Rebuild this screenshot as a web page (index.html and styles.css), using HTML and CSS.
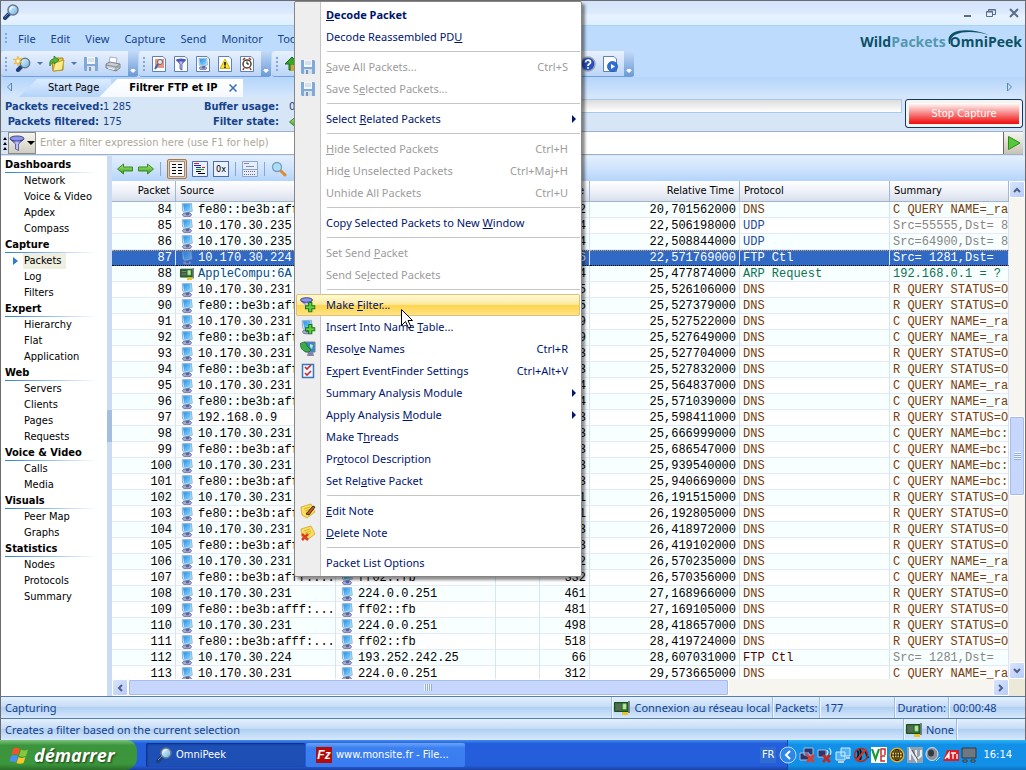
FILE: index.html
```html
<!DOCTYPE html>
<html lang="fr">
<head>
    <meta charset="UTF-8">
    <meta name="viewport" content="width=device-width, initial-scale=1.0">
    <title>OmniPeek</title>
    <link rel="stylesheet" href="styles.css">
</head>
<body>
    <!-- Icon sprite -->
    <svg class="sprite" aria-hidden="true">
        <linearGradient id="gLens" x1="0" y1="0" x2="1" y2="1"><stop offset="0" stop-color="#f4fcff"/><stop offset="1" stop-color="#5fb0e8"/></linearGradient>
        <linearGradient id="gScreen" x1="0" y1="0" x2="1" y2="1"><stop offset="0" stop-color="#1e8ce6"/><stop offset="1" stop-color="#8fe0ff"/></linearGradient>
        <linearGradient id="gGreen" x1="0" y1="0" x2="0" y2="1"><stop offset="0" stop-color="#b2f07a"/><stop offset="1" stop-color="#2f9a1c"/></linearGradient>
        <linearGradient id="gFunnel" x1="0" y1="0" x2="1" y2="0"><stop offset="0" stop-color="#2a2f98"/><stop offset=".5" stop-color="#c4ccff"/><stop offset="1" stop-color="#2a2f98"/></linearGradient>
        <symbol id="lens" viewBox="0 0 16 16"><path d="M7 9 2 14" stroke="#1d3f7c" stroke-width="4" stroke-linecap="round"/><path d="M6 9 2 13" stroke="#5a8ccc" stroke-width="1"/><circle cx="10" cy="6" r="5" fill="url(#gLens)" stroke="#6a7888" stroke-width="1.5"/><path d="M7 6a3 3 0 0 1 3-3" stroke="#fff" fill="none"/></symbol>
        <symbol id="lensr" viewBox="0 0 16 16"><path d="m9 9 5 5" stroke="#e08a30" stroke-width="3" stroke-linecap="round"/><circle cx="6" cy="6" r="4.5" fill="#a8e0fb" stroke="#7c9cb8" stroke-width="1.3"/></symbol>
        <symbol id="newcap" viewBox="0 0 18 16"><path d="M9 10 5 14" stroke="#1d3f7c" stroke-width="4" stroke-linecap="round"/><circle cx="12" cy="7" r="4.7" fill="url(#gLens)" stroke="#6a7888" stroke-width="1.5"/><path d="m5 0 1 3 3-1-2 3 2 2-3-.5L5 10 4 7 1 8l2-3-3-2 3.500.500z" fill="#f8c93c" stroke="#e6a820" stroke-width=".5"/><circle cx="5" cy="5" r="1.500" fill="#fff"/></symbol>
        <symbol id="folder" viewBox="0 0 16 16"><path d="M3 4h4l1-2h6v12l-10 1z" fill="#e8c84a" stroke="#a88418"/><path d="m6 7 9-3-2 10-9 1z" fill="#fbec8e" stroke="#b8921e" stroke-width=".8"/><path d="M1 10C0 5 2 3 5 3V0l5 4-5 4V6C3 6 2 8 1 10z" fill="#54b93a" stroke="#256e18" stroke-width=".7"/></symbol>
        <symbol id="disk" viewBox="0 0 16 16"><path d="M1 1h13l1 1v13H2l-1-1z" fill="#7fa9d8"/><path d="M4 1h8v7H4z" fill="#f3f6fa"/><path d="M5 3h6M5 5h6" stroke="#b9cbe0"/><path d="M4 10h8v5H4z" fill="#d9e0e8"/><path d="M6 11h2v4H6z" fill="#7495bd"/></symbol>
        <symbol id="printer" viewBox="0 0 16 16"><path d="m5 1 7 1-1 6-7-1z" fill="#fff" stroke="#8892a4" stroke-width=".7"/><path d="m1 8 4-2 10 2v4l-4 3L1 12z" fill="#c8ccd4" stroke="#646c7c" stroke-width=".8"/><path d="m1 9 10 2 4-3M11 11v4" stroke="#747c8c" fill="none" stroke-width=".8"/><path d="m3 12 6 1.500" stroke="#fff"/><circle cx="13" cy="11" r=".8" fill="#2fa32f"/></symbol>
        <symbol id="page" viewBox="0 0 16 16"><path d="M1.500.500h10.500l2.500 2.500v12.500h-13z" fill="#fdfeff" stroke="#5f80b8"/></symbol>
        <symbol id="pglens" viewBox="0 0 16 16"><use href="#page"/><path d="M4 3h9v9H4z" fill="#e8957c"/><path d="m7 8-3 5" stroke="#3767a8" stroke-width="2"/><circle cx="9" cy="6" r="2.500" fill="#d6efff" stroke="#7a5a66"/></symbol>
        <symbol id="funnel" viewBox="0 0 16 16"><path d="M1 4 6.500 9v5l3 1.500V9L15 4z" fill="url(#gFunnel)" stroke="#24297c" stroke-width=".6"/><ellipse cx="8" cy="3.500" rx="7" ry="2.500" fill="#8e97e4" stroke="#24297c" stroke-width=".8"/></symbol>
        <symbol id="pgfunnel" viewBox="0 0 16 16"><use href="#page"/><path d="M3.500 4 7 8v5l2 1V8l3.500-4z" fill="url(#gFunnel)" stroke="#24297c" stroke-width=".6"/><ellipse cx="8" cy="4" rx="4.700" ry="1.500" fill="#4d57c0"/></symbol>
        <symbol id="pc" viewBox="0 0 16 16"><ellipse cx="8" cy="13.500" rx="5" ry="2.300" fill="#a6abd2" stroke="#55588c" stroke-width=".8"/><path d="M6 10h5l-1 4H7z" fill="#5c6098"/><path d="m2.500.800 10.500-.5 1 9L5 11.500 3 9z" fill="#cfe2f6" stroke="#6c86b8" stroke-width=".7"/><path d="m3.500 1.500 8.500-.5.500 7.500L5 10z" fill="url(#gScreen)"/></symbol>
        <symbol id="pgpc" viewBox="0 0 16 16"><use href="#page"/><svg x="2" y="2" width="12" height="12"><use href="#pc"/></svg></symbol>
        <symbol id="pgwarn" viewBox="0 0 16 16"><use href="#page"/><path d="m8 3 5 9.500H3z" fill="#ffe21f" stroke="#b59a00" stroke-width=".7"/><path d="M8 6v3.500M8 10.500V12" stroke="#000" stroke-width="1.500"/></symbol>
        <symbol id="pgclock" viewBox="0 0 16 16"><use href="#page"/><path d="M4 4l2-2M12 4l-2-2M5 12l-1 2M11 12l1 2" stroke="#a03a20" stroke-width="1.600"/><circle cx="8" cy="8" r="4" fill="#fff" stroke="#53402e" stroke-width="1.500"/><path d="M8 5.500V8h2" stroke="#000" fill="none"/></symbol>
        <symbol id="pgplay" viewBox="0 0 16 16"><use href="#page"/><circle cx="10.500" cy="10.500" r="5" fill="#2f6fdc" stroke="#1c49a0" stroke-width=".7"/><path d="m9 8 4 2.500-4 2.500z" fill="#fff"/></symbol>
        <symbol id="help" viewBox="0 0 16 16"><circle cx="8" cy="8" r="7" fill="#2a4fc0" stroke="#9aa4b4" stroke-width="1.500"/><path d="M5.500 6.500C5.500 3 11 3.500 10.500 6.500 10 8 8 8 8 10M8 11.300v1.500" stroke="#fff" stroke-width="1.800" fill="none"/></symbol>
        <symbol id="uparrow" viewBox="0 0 16 16"><path d="M8 1 1 8h4v6h7V8h3z" fill="#38a52a" stroke="#1b6514"/><path d="M7 9h6v6H7z" fill="#d6a13a"/></symbol>
        <symbol id="card" viewBox="0 0 16 16"><path d="M.500 2.500h13.500v9H.500z" fill="#2e7130" stroke="#1f4c24"/><path d="M2 4h5v6H2z" fill="#182818"/><path d="M2 5h5M2 7h5M2 9h5" stroke="#b9cdb0" stroke-width=".8"/><path d="M9 4h3v5H9z" fill="#c4e4b4" stroke="#93d573" stroke-width=".8"/><path d="M8 12h6v3H8z" fill="#e5c52e"/><path d="M15 1v12" stroke="#5d6567" stroke-width="1.500"/></symbol>
        <symbol id="arrl" viewBox="0 0 16 12"><path d="m.500 6 6-5v3H15.500v4H6.500v3z" fill="url(#gGreen)" stroke="#3b8a22"/></symbol>
        <symbol id="arrr" viewBox="0 0 16 12"><path d="m15.500 6-6-5v3H.500v4h9v3z" fill="url(#gGreen)" stroke="#3b8a22"/></symbol>
        <symbol id="plus" viewBox="0 0 10 10"><path d="M3.500.500h3v3h3v3h-3v3h-3v-3h-3v-3h3z" fill="#62cf3d" stroke="#187415"/></symbol>
        <symbol id="mkfilter" viewBox="0 0 16 16"><path d="m1 4 4 4v4l2 1V8l5-4z" fill="url(#gFunnel)"/><ellipse cx="6.500" cy="3" rx="6" ry="2.300" fill="#8e97e4" stroke="#24297c" stroke-width=".8"/><use href="#plus" x="5" y="5" width="10.500" height="10.500"/></symbol>
        <symbol id="nametab" viewBox="0 0 16 16"><svg width="14" height="16"><use href="#pc"/></svg><use href="#plus" x="5" y="5" width="10.500" height="10.500"/></symbol>
        <symbol id="resolve" viewBox="0 0 16 16"><path d="m4 1 11 0v10H5z" fill="#3b83cc" stroke="#74809c"/><path d="m8 11 5 0 1 4H7z" fill="#8286a8"/><path d="M0 3c3-3 7-2 7 2l4 4-2 2C4 11 1 9 0 3z" fill="#3aad44" stroke="#1a5c34" stroke-width=".7"/><path d="m10 3 3 1-1 4-2-2z" fill="#b9eeb7"/></symbol>
        <symbol id="checks" viewBox="0 0 16 16"><path d="M2.500 1.500h11v13h-11z" fill="#eef6ff" stroke="#3a78b8" stroke-width="1.500"/><path d="m5 4 2 2 4-4M5 10l2 2 4-4" stroke="#d22c2c" stroke-width="1.700" fill="none"/></symbol>
        <symbol id="note" viewBox="0 0 16 16"><path d="m1 4 10-3 4 8-8 6-5-3z" fill="#fbdf58" stroke="#c89a28" stroke-width=".7"/><path d="m4 6 6-2M5 8l6-2M6 10l5-2" stroke="#c8a23a" stroke-width=".8"/></symbol>
        <symbol id="editnote" viewBox="0 0 16 16"><use href="#note"/><path d="m6 11 7-8 2 1-6 8z" fill="#c85a28" stroke="#24150c" stroke-width=".8"/></symbol>
        <symbol id="delnote" viewBox="0 0 16 16"><use href="#note"/><path d="m2 9 6 6M8 9l-6 6" stroke="#dd3c24" stroke-width="2.500"/></symbol>
    </svg>

    <div class="app">
        <header class="titlebar">
            <svg class="ico"><use href="#lens"/></svg>
            <div class="winbtns">
                <button aria-label="Minimize"><svg viewBox="0 0 10 10"><path d="M1 8h7" stroke="#5a6d88" stroke-width="2"/></svg></button>
                <button aria-label="Restore"><svg viewBox="0 0 10 10"><path d="M.500 3.500h6v5h-6zM2.500 3V1.500h7v5H7M.500 4h6M2 2h7" fill="none" stroke="#5a6d88"/></svg></button>
                <button aria-label="Close"><svg viewBox="0 0 10 10"><path d="m1 1 8 8M9 1 1 9" stroke="#5a6d88" stroke-width="2"/></svg></button>
            </div>
        </header>

        <div class="top">
            <div>
                <nav class="menubar">
                    <i class="grip"></i>
                    <button>File</button><button>Edit</button><button>View</button><button>Capture</button><button>Send</button><button>Monitor</button><button>Tools</button>
                </nav>
                <div class="toolbars">
                    <div class="toolbar tb-file">
                        <i class="grip"></i>
                        <button aria-label="New capture"><svg class="ico wide"><use href="#newcap"/></svg></button>
                        <i class="drop"></i>
                        <button aria-label="Open"><svg class="ico"><use href="#folder"/></svg></button>
                        <i class="drop"></i>
                        <button aria-label="Save"><svg class="ico"><use href="#disk"/></svg></button>
                        <button aria-label="Print"><svg class="ico"><use href="#printer"/></svg></button>
                        <i class="more"></i>
                    </div>
                    <div class="toolbar tb-view">
                        <i class="grip"></i>
                        <button aria-label="Capture window"><svg class="ico"><use href="#pglens"/></svg></button>
                        <button aria-label="Filters"><svg class="ico"><use href="#pgfunnel"/></svg></button>
                        <button aria-label="Names"><svg class="ico"><use href="#pgpc"/></svg></button>
                        <button aria-label="Alarms"><svg class="ico"><use href="#pgwarn"/></svg></button>
                        <button aria-label="Log"><svg class="ico"><use href="#pgclock"/></svg></button>
                        <i class="more"></i>
                    </div>
                    <div class="toolbar tb-help">
                        <i class="grip"></i>
                        <button aria-label="Up"><svg class="ico"><use href="#uparrow"/></svg></button>
                        <span class="spacer"></span>
                        <button aria-label="Help"><svg class="ico"><use href="#help"/></svg></button>
                        <button aria-label="Demo"><svg class="ico"><use href="#pgplay"/></svg></button>
                        <i class="more"></i>
                    </div>
                </div>
            </div>
            <div class="brand">
                <span>Wild</span><span class="light">Packets</span>
                <span class="omni">OmniPeek<svg viewBox="0 0 50 20"><path d="M2 15C-3 -2 26 -1 42 6 26 1 2 1 3 15z" fill="#0c5066"/></svg></span>
            </div>
        </div>

        <div class="tabs">
            <svg class="tabarrow" viewBox="0 0 6 10"><path d="M5.500 1v8l-4-4z" fill="none" stroke="#5a84b8"/></svg>
            <button class="tab">Start Page</button>
            <button class="tab active">Filtrer FTP et IP <svg class="x" viewBox="0 0 8 8"><path d="m.500.500 7 7M7.500.500l-7 7" stroke="#3c6eb0" stroke-width="1.500"/></svg></button>
            <svg class="tabarrow last" viewBox="0 0 6 10"><path d="M.500 1v8l4-4z" fill="none" stroke="#5a84b8"/></svg>
        </div>

        <div class="info">
            <dl>
                <dt>Packets received:</dt><dd>1 285</dd>
                <dt>Packets filtered:</dt><dd>175</dd>
            </dl>
            <dl class="second">
                <dt>Buffer usage:</dt><dd>0%</dd>
                <dt>Filter state:</dt><dd><svg viewBox="0 0 16 12"><use href="#arrl"/></svg></dd>
            </dl>
            <div class="progress"></div>
            <button class="stop">Stop Capture</button>
        </div>

        <div class="filter">
            <i class="updown"><b></b><b></b><b></b></i>
            <button class="filterbtn" aria-label="Insert filter"><svg class="ico"><use href="#funnel"/></svg><i class="drop black"></i></button>
            <input type="text" aria-label="Filter expression" placeholder="Enter a filter expression here (use F1 for help)">
            <button class="apply" aria-label="Apply"><svg viewBox="0 0 14 16"><path d="M1.500 1.500v13L13 8z" fill="#58c83a" stroke="#2b8a1c"/></svg></button>
        </div>

        <main>
            <nav class="views">
                <h2>Dashboards</h2>
                <a href="#">Network</a><a href="#">Voice &amp; Video</a><a href="#">Apdex</a><a href="#">Compass</a>
                <h2>Capture</h2>
                <a href="#" class="current">Packets</a><a href="#">Log</a><a href="#">Filters</a>
                <h2>Expert</h2>
                <a href="#">Hierarchy</a><a href="#">Flat</a><a href="#">Application</a>
                <h2>Web</h2>
                <a href="#">Servers</a><a href="#">Clients</a><a href="#">Pages</a><a href="#">Requests</a>
                <h2>Voice &amp; Video</h2>
                <a href="#">Calls</a><a href="#">Media</a>
                <h2>Visuals</h2>
                <a href="#">Peer Map</a><a href="#">Graphs</a>
                <h2>Statistics</h2>
                <a href="#">Nodes</a><a href="#">Protocols</a><a href="#">Summary</a>
            </nav>
            <div class="splitter"></div>
            <section class="packets">
                <div class="pktbar">
                    <button aria-label="Back"><svg class="arr"><use href="#arrl"/></svg></button>
                    <button aria-label="Forward"><svg class="arr"><use href="#arrr"/></svg></button>
                    <i class="bar"></i>
                    <button class="on" aria-label="Packet list"><svg viewBox="0 0 16 16"><path d="M.500.500h15v15H.500z" fill="#f6f6f6" stroke="#8090b0"/><path d="M3 3.500h4M9 3.500h4M3 6.500h4M9 6.500h4M3 9.500h4M9 9.500h4M3 12.500h4M9 12.500h4" stroke="#000"/></svg></button>
                    <button aria-label="Decode"><svg viewBox="0 0 16 16"><path d="M.500.500h15v15H.500z" fill="#eaf1fc" stroke="#4c6ca8"/><path d="M2 2.500h5" stroke="#d22"/><path d="M2 4.500h7M4 6.500h5" stroke="#22c"/><path d="M4 8.500h8" stroke="#191"/><path d="M4 10.500h5M6 12.500h7" stroke="#000"/><path d="M10 6.500h3" stroke="#d22"/></svg></button>
                    <button class="hex">0x</button>
                    <i class="bar"></i>
                    <button aria-label="Layout"><svg viewBox="0 0 16 16"><path d="M.500.500h15v15H.500zM0 8.500h16" fill="#e6eefb" stroke="#8ba4d0"/><path d="M2 2.500h5M4 5.500h8" stroke="#88a"/><path d="M2 10.500h12M2 13.500h12" stroke="#667" stroke-dasharray="1 1"/></svg></button>
                    <i class="bar"></i>
                    <button aria-label="Find"><svg><use href="#lensr"/></svg></button>
                </div>
                <div class="grid">
                    <div class="tablewrap">
                        <table>
                            <colgroup><col class="c-num"><col class="c-addr"><col class="c-addr"><col class="c-flags"><col class="c-size"><col class="c-wide"><col class="c-wide"><col></colgroup>
                            <thead><tr><th class="r">Packet</th><th>Source</th><th>Destination</th><th>Flags</th><th class="r">Size</th><th class="r">Relative Time</th><th>Protocol</th><th>Summary</th></tr></thead>
                            <tbody id="rows"></tbody>
                        </table>
                    </div>
                    <div class="vscroll">
                        <button aria-label="Scroll up"><svg viewBox="0 0 8 8"><path d="m1 6 3-3 3 3" fill="none" stroke="#4d6185" stroke-width="2"/></svg></button>
                        <div class="thumb"></div>
                        <button aria-label="Scroll down"><svg viewBox="0 0 8 8"><path d="m1 2 3 3 3-3" fill="none" stroke="#4d6185" stroke-width="2"/></svg></button>
                    </div>
                    <div class="hscroll">
                        <button aria-label="Scroll left"><svg viewBox="0 0 8 8"><path d="M6 1 3 4l3 3" fill="none" stroke="#4d6185" stroke-width="2"/></svg></button>
                        <div class="thumb"></div>
                        <button aria-label="Scroll right"><svg viewBox="0 0 8 8"><path d="m2 1 3 3-3 3" fill="none" stroke="#4d6185" stroke-width="2"/></svg></button>
                    </div>
                </div>
            </section>
        </main>

        <footer class="status">
            <span class="grow">Capturing</span>
            <span class="cell"><svg class="ico"><use href="#card"/></svg>Connexion au réseau local</span>
            <span class="cell">Packets:</span>
            <span class="cell count">177</span>
            <span class="cell">Duration:</span>
            <span class="cell time">00:00:48</span>
        </footer>
        <footer class="status">
            <span class="grow">Creates a filter based on the current selection</span>
            <span class="cell adapter"><svg class="ico"><use href="#card"/></svg>None</span>
            <span class="cell rest"></span>
        </footer>
    </div>

    <div class="taskbar">
        <button class="start"><svg viewBox="0 0 20 18"><path d="M3 3c3-2 5-1 7 0L8 9C6 8 4 7.500 1.500 9z" fill="#f0552a"/><path d="M11 3.500c2 1 4 1.500 7 0L16 10c-2 1-5 1-7 0z" fill="#86c83c"/><path d="M1 10c3-1.500 5-1 7 0l-2 6.500c-2-1-4-1.500-7 0z" fill="#4a90f0"/><path d="M8.500 11c2 1 4 1.500 7 0l-2 6c-2 1-5 1-7 0z" fill="#f8c828"/></svg>démarrer</button>
        <button class="task pressed"><svg class="ico"><use href="#lens"/></svg>OmniPeek</button>
        <button class="task"><span class="fz">Fz</span>www.monsite.fr - File...</button>
        <span class="lang">FR</span>
        <div class="tray">
            <button class="expand" aria-label="Show hidden icons"><svg viewBox="0 0 18 18"><circle cx="9" cy="9" r="8" fill="#2f86e8" stroke="#b8dcfa"/><path d="m11 5-4 4 4 4" fill="none" stroke="#fff" stroke-width="2"/></svg></button>
            <svg viewBox="0 0 16 16"><path d="M5 1h9v7H5zM1 6h9v7H1z" fill="#29336c" stroke="#aebbd8"/><path d="m8 8 7 7M15 8l-7 7" stroke="#e23a28" stroke-width="2.500"/></svg>
            <svg viewBox="0 0 16 16"><path d="M1 3h8v7H1z" fill="#29336c" stroke="#aebbd8"/><path d="M10 3q2 2 0 5M12 1q4 4 0 8" fill="none" stroke="#fff"/><path d="m6 8 7 7M13 8l-7 7" stroke="#c4281c" stroke-width="2.500"/></svg>
            <svg viewBox="0 0 16 16"><path d="M6 1h9v8H6zM1 5h9v8H1z" fill="#49b4f0" stroke="#d8eaff"/><path d="M3 15h6M11 11h4" stroke="#c6cce0" stroke-width="2"/></svg>
            <svg viewBox="0 0 16 16"><path d="M4 3q3 4 0 9M7 2q2 6 0 11M12 3l3 8" stroke="#111" stroke-width="2" fill="none"/><circle cx="8" cy="8" r="6.500" fill="none" stroke="#b42a18" stroke-width="1.500"/><path d="M13 2 3 14" stroke="#d8321c" stroke-width="2"/></svg>
            <svg viewBox="0 0 16 16"><path d="M0 0h16v16H0z" fill="#fff"/><path d="m1 2 3.500 10L8 2" fill="none" stroke="#1a9a34" stroke-width="2.200"/><path d="M10 8V2h4v6M14 9h-4v5h4" fill="none" stroke="#d02828" stroke-width="1.500"/></svg>
            <svg viewBox="0 0 16 16"><circle cx="8" cy="8" r="7.500" fill="#e9a820"/><circle cx="8" cy="8" r="5.500" fill="#ffd24a" stroke="#221"/><path d="M2.500 8h11M8 2v12M3.500 5h9M3.500 11h9" stroke="#221"/><ellipse cx="8" cy="8" rx="2.500" ry="5.500" fill="none" stroke="#221"/></svg>
            <svg viewBox="0 0 16 16"><path d="M0 0h16v16H0z" fill="#96a0ac"/><path d="M3 13V3l6 10V3M9 13l5-4V3" fill="none" stroke="#e8ecf0" stroke-width="2"/><path d="m5 3 6 10" stroke="#46505c"/></svg>
            <svg viewBox="0 0 16 16"><ellipse cx="7" cy="7" rx="6" ry="6.500" fill="#8d9299" stroke="#dde"/><ellipse cx="6" cy="6" rx="3" ry="3.500" fill="#353a42"/><path d="m11 14 4-4" stroke="#cde"/></svg>
            <svg viewBox="0 0 16 16"><path d="M4 3h12v11H0z" fill="#dd1c24"/><path d="m2 12 4-6v6M3 10h3M8 6h5M10 6v6M14 7v5" stroke="#fff" stroke-width="1.300" fill="none"/></svg>
            <svg viewBox="0 0 16 16"><path d="M1 1h14v10H1z" fill="#6f7780" stroke="#30363e"/><path d="M2 13h4v2H2zM10 13h4v2h-4z" fill="#8a929a" stroke="#30363e"/></svg>
            <span class="clock">16:14</span>
        </div>
    </div>

    <!-- Context menu over the packet list -->
    <div class="ctxmenu" role="menu">
        <button class="bold"><span><u>D</u>ecode Packet</span></button>
        <button><span>Decode Reassembled PD<u>U</u></span></button>
        <hr>
        <button disabled><svg><use href="#disk"/></svg><span><u>S</u>ave All Packets...</span><kbd>Ctrl+S</kbd></button>
        <button disabled><svg><use href="#disk"/></svg><span>Save S<u>e</u>lected Packets...</span></button>
        <hr>
        <button class="sub"><span>Select <u>R</u>elated Packets</span></button>
        <hr>
        <button disabled><span><u>H</u>ide Selected Packets</span><kbd>Ctrl+H</kbd></button>
        <button disabled><span>Hid<u>e</u> Unselected Packets</span><kbd>Ctrl+Maj+H</kbd></button>
        <button disabled><span>Unhide All Packets</span><kbd>Ctrl+U</kbd></button>
        <hr>
        <button><span>Copy Selected Packets to New <u>W</u>indow</span></button>
        <hr>
        <button disabled><span>Set Send <u>P</u>acket</span></button>
        <button disabled><span>Send Se<u>l</u>ected Packets</span></button>
        <hr>
        <button class="hover"><svg><use href="#mkfilter"/></svg><span>Make <u>F</u>ilter...</span></button>
        <button><svg><use href="#nametab"/></svg><span>Insert Into Name <u>T</u>able...</span></button>
        <button><svg><use href="#resolve"/></svg><span>Resol<u>v</u>e Names</span><kbd>Ctrl+R</kbd></button>
        <button><svg><use href="#checks"/></svg><span>E<u>x</u>pert EventFinder Settings</span><kbd>Ctrl+Alt+V</kbd></button>
        <button class="sub"><span>Summary Analysis Module</span></button>
        <button class="sub"><span>Apply Analysis <u>M</u>odule</span></button>
        <button><span>Make T<u>h</u>reads</span></button>
        <button><span>Pr<u>o</u>tocol Description</span></button>
        <button><span>Set Rel<u>a</u>tive Packet</span></button>
        <hr>
        <button><svg><use href="#editnote"/></svg><span><u>E</u>dit Note</span></button>
        <button><svg><use href="#delnote"/></svg><span><u>D</u>elete Note</span></button>
        <hr>
        <button><span>Packet List Options</span></button>
    </div>
    <svg class="cursor" viewBox="0 0 12 20"><path d="M.500.500v16l4-4 3 6.500 2.500-1-3-6.500H11.500z" fill="#fff" stroke="#000"/></svg>

    <script src="script.js"></script>
</body>
</html>
```
FILE: styles.css
```css
* {
    box-sizing: border-box;
}
body {
    margin: 0;
    height: 100vh;
    display: flex;
    flex-direction: column;
    overflow: hidden;
    font: 11px/16px "DejaVu Sans Condensed", "DejaVu Sans", sans-serif;
    color: #000;
    background: #d6e6f6;
}
button, input {
    font: inherit;
    color: inherit;
    border: 0;
    padding: 0;
    background: none;
}
button {
    display: flex;
    align-items: center;
    white-space: nowrap;
}
svg {
    display: block;
    flex: none;
}
.sprite {
    position: absolute;
    width: 0;
    height: 0;
}
.ico {
    width: 16px;
    height: 16px;
}
.ico.wide {
    width: 18px;
}
.app {
    flex: 1;
    min-height: 0;
    display: flex;
    flex-direction: column;
    border: 1px solid #6c6c70;
    border-bottom: 0;
}

/* title bar and menus */
.titlebar {
    height: 25px;
    flex: none;
    display: flex;
    align-items: flex-start;
    justify-content: space-between;
    padding: 3px 6px 0 2px;
    background: linear-gradient(#d2e2fa, #dceafc 50%, #e6f2ff 60%, #e0efff);
    border-bottom: 1px solid #a8d4f4;
}
.winbtns {
    display: flex;
    gap: 13px;
    padding-top: 4px;
}
.winbtns svg {
    width: 10px;
    height: 10px;
}
.top {
    flex: none;
    display: flex;
    justify-content: space-between;
    background: #bddcfd;
}
.menubar {
    height: 25px;
    display: flex;
    align-items: center;
    gap: 15px;
    padding-left: 4px;
    font-family: "Noto Sans", sans-serif;
    color: #15428b;
}
.grip {
    flex: none;
    width: 2px;
    height: 14px;
    background: repeating-linear-gradient(#7ea8dc 0 2px, transparent 2px 4px);
}
.menubar .grip {
    height: 11px;
    margin-right: -4px;
}
.toolbars {
    display: flex;
    gap: 1px;
    height: 26px;
}
.toolbar {
    display: flex;
    align-items: center;
    gap: 6px;
    padding-left: 4px;
    border-radius: 3px;
    background: linear-gradient(#e8f1fd, #d3e3fa 50%, #bbd5f8);
    border-bottom: 1px solid #6f9fdc;
}
.tb-file {
    width: 137px;
}
.tb-view {
    width: 132px;
}
.tb-help {
    width: 362px;
}
.spacer {
    flex: 1;
}
.more {
    align-self: stretch;
    width: 10px;
    margin-left: auto;
    background: linear-gradient(#c4dbf8, #6c9ad8);
    position: relative;
}
.more::after {
    content: "";
    position: absolute;
    left: 2px;
    bottom: 3px;
    border: 3px solid transparent;
    border-top-color: #fff;
    border-bottom: 0;
    box-shadow: 0 -2px 0 -1px #fff;
}
.drop {
    border: 3px solid transparent;
    border-top-color: #4a76b8;
    border-bottom: 0;
}
.drop.black {
    border-width: 4px;
    border-top-color: #000;
    border-bottom: 0;
}
.brand {
    display: flex;
    padding: 6px 3px 0 0;
    font: bold 14px/20px "Open Sans", sans-serif;
    color: #0c5066;
}
.brand .light {
    color: #5596b0;
    margin-right: 4px;
}
.omni {
    position: relative;
}
.omni svg {
    position: absolute;
    left: -3px;
    top: -3px;
    width: 50px;
    height: 20px;
}

/* tabs */
.tabs {
    height: 20px;
    flex: none;
    display: flex;
    align-items: stretch;
    padding: 2px 12px 0 5px;
    background: linear-gradient(#b4d5fb, #d4e6fc);
}
.tabarrow {
    width: 6px;
    height: 10px;
    margin-top: 3px;
}
.tabarrow.last {
    margin-left: auto;
}
.tab {
    padding: 0 12px 0 29px;
    background: linear-gradient(#dcecff, #b4d3f8);
    clip-path: polygon(18px 0, 100% 0, 100% 100%, 0 100%);
    margin-left: 7px;
}
.tab.active {
    background: linear-gradient(#fff, #f4f9ff);
    font-weight: bold;
    padding: 0 6px 0 30px;
    margin-left: -12px;
}
.tab .x {
    width: 8px;
    height: 8px;
    margin-left: 12px;
}

/* capture info */
.info {
    height: 34px;
    flex: none;
    display: flex;
    align-items: flex-start;
    padding: 2px 2px 0 4px;
    color: #15428b;
    background: #d6e6f6;
}
.info dl {
    margin: 0;
    display: grid;
    grid-template-columns: 94px auto;
    column-gap: 4px;
    line-height: 15px;
    width: 170px;
}
.info dl.second {
    grid-template-columns: 104px auto;
    column-gap: 10px;
    width: 220px;
}
.info dt {
    font-weight: bold;
    text-align: right;
    white-space: nowrap;
}
.info dd {
    margin: 0;
    display: flex;
    align-items: center;
}
.info dd svg {
    width: 16px;
    height: 12px;
}
.progress {
    flex: 1;
    height: 14px;
    border: 1px solid #a8c8ec;
    background: linear-gradient(#dcdcdc, #fff);
}
.stop {
    width: 118px;
    height: 29px;
    margin-left: 3px;
    justify-content: center;
    color: #fff;
    border: 1px solid #0b3a70;
    border-radius: 3px;
    box-shadow: inset 0 0 0 3px #f6f4ee;
    background: linear-gradient(#fff 3px, #f01414 85%);
}
.filter {
    height: 24px;
    flex: none;
    display: flex;
    background: #fff;
    border: 1px solid #9cb0c8;
    border-width: 1px 0;
    margin-right: 2px;
}
.updown {
    width: 7px;
    display: flex;
    flex-direction: column;
    justify-content: center;
    align-items: center;
    gap: 2px;
    background: #d6e6f6;
}
.updown b {
    border: 2px solid transparent;
    border-bottom: 3px solid #000;
    border-top: 0;
}
.filterbtn {
    width: 28px;
    gap: 2px;
    background: linear-gradient(#f6f5ee, #d0cdc0);
    border: 1px solid #888;
}
.filter input {
    flex: 1;
    padding: 0 4px;
    outline: 0;
}
.filter input::placeholder {
    color: #aaa898;
    opacity: 1;
}
.apply {
    width: 20px;
    justify-content: center;
    background: linear-gradient(#f6f5ee, #c6c3b4);
    border-left: 1px solid #666;
}
.apply svg {
    width: 14px;
    height: 16px;
}

/* view list */
main {
    flex: 1;
    min-height: 0;
    display: flex;
    padding-top: 1px;
}
.views {
    width: 106px;
    padding-top: 1px;
    background: #fff;
}
.views h2 {
    margin: 0 10px 0 4px;
    font-size: 11px;
    line-height: 16px;
    background: linear-gradient(90deg, #2f80d8, #fff) bottom / 100% 1px no-repeat;
}
.views a {
    display: table;
    position: relative;
    margin-left: 22px;
    padding: 0 5px 0 1px;
    color: #000;
    text-decoration: none;
}
.views .current {
    background: #eeefdf;
}
.views .current::before {
    content: "";
    position: absolute;
    left: -10px;
    top: 4px;
    border: 4px solid transparent;
    border-left: 5px solid #2a7ad8;
    border-right: 0;
}
.splitter {
    width: 5px;
    background: linear-gradient(#a4bedf, #a4bedf) center / 5px 32px no-repeat #c9dcf4;
}

/* packet list */
.packets {
    flex: 1;
    min-width: 0;
    display: flex;
    flex-direction: column;
}
.pktbar {
    height: 25px;
    flex: none;
    display: flex;
    align-items: center;
    gap: 5px;
    padding-left: 5px;
    background: linear-gradient(#e2effe, #cfe3fc 50%, #b4d4fb);
}
.pktbar button svg {
    width: 16px;
    height: 16px;
}
.pktbar .arr {
    height: 12px;
}
.bar {
    width: 1px;
    height: 14px;
    margin: 0 1px;
    background: #85a8d8;
}
.on {
    padding: 1px;
    border: 1px solid #b07840;
    border-radius: 2px;
    background: #fbc88c;
}
.hex {
    width: 16px;
    height: 16px;
    justify-content: center;
    font-size: 9px;
    background: #eaf1fc;
    border: 1px solid #4c6ca8;
}
.grid {
    flex: 1;
    min-height: 0;
    display: grid;
    grid-template: minmax(0, 1fr) 17px / minmax(0, 1fr) 16px;
    background: #ece9d8;
}
.tablewrap {
    overflow: hidden;
    background: #fff;
}
table {
    width: 100%;
    table-layout: fixed;
    border-collapse: separate;
    border-spacing: 0;
}
.c-num { width: 64px; }
.c-addr { width: 160px; }
.c-flags { width: 44px; }
.c-size { width: 50px; }
.c-wide { width: 150px; }
th, td {
    padding: 0 3px;
    text-align: left;
    white-space: nowrap;
    overflow: hidden;
    border-right: 1px solid #d6e4fa;
}
th {
    height: 21px;
    padding: 0 5px 0 4px;
    font-weight: normal;
    background: linear-gradient(#fff, #eef1f8 50%, #d9dfeb);
    border-right-color: #a0b8d4;
    border-bottom: 1px solid #a0b4cc;
}
td {
    height: 16px;
    padding-top: 1px;
    line-height: 14px;
    font-family: "Liberation Mono", monospace;
    font-size: 12px;
    border-bottom: 1px solid #e2eafc;
}
td svg {
    display: inline-block;
    width: 16px;
    height: 14px;
    margin-right: 3px;
    vertical-align: top;
}
.r {
    text-align: right;
}
tr:nth-child(odd) td {
    background: #f7ffff;
}
.dns { color: #7a3c0c; }
.udp { color: #1f4c9c; }
.arp { color: #107050; }
.ftp { color: #500000; }
.gray { color: #848484; }
.mac { color: #0c4888; }
tbody tr.selected td {
    color: #fff;
    background: #316ac5;
    padding-top: 0;
    border-top: 1px dotted #e0a050;
    border-bottom: 1px dotted #000;
}
.selected svg {
    opacity: .5;
}
.vscroll, .hscroll {
    display: flex;
    background: #f6f5f0;
}
.vscroll {
    flex-direction: column;
}
.vscroll button, .hscroll button {
    flex: none;
    width: 16px;
    height: 17px;
    justify-content: center;
    border: 1px solid #fff;
    border-radius: 2px;
    background: linear-gradient(135deg, #d8e4fe, #b8ccf6);
}
.vscroll svg, .hscroll svg {
    width: 8px;
    height: 8px;
}
.thumb {
    border: 1px solid #fff;
    border-radius: 2px;
    box-shadow: inset 0 0 0 1px #a8bcec;
}
.vscroll .thumb {
    height: 16%;
    margin: 218px 0 auto;
    background: repeating-linear-gradient(#f0f6ff 0 1px, #8cacf0 1px 2px) center / 7px 8px no-repeat #c6d6fc;
}
.hscroll .thumb {
    width: 67%;
    margin-right: auto;
    background: repeating-linear-gradient(90deg, #f0f6ff 0 1px, #8cacf0 1px 2px) center / 8px 7px no-repeat #c6d6fc;
}

/* status lines */
.status {
    height: 22px;
    flex: none;
    display: flex;
    align-items: center;
    padding-left: 4px;
    font-family: "Noto Sans", sans-serif;
    color: #15428b;
    border-top: 1px solid #567db0;
    background: linear-gradient(#e4f0fe, #c6dcf6 45%, #b0d0f2 50%, #d6e8fc);
}
.grow {
    flex: 1;
}
.cell {
    display: flex;
    align-items: center;
    align-self: stretch;
    gap: 4px;
    padding: 0 2px;
    border-left: 1px solid #a0bce0;
    box-shadow: inset 1px 0 #eef6ff;
}
.count {
    width: 75px;
    padding-left: 4px;
}
.time {
    width: 77px;
    padding-left: 4px;
}
.rest {
    width: 69px;
}

/* Windows taskbar */
.taskbar {
    height: 30px;
    flex: none;
    display: flex;
    align-items: center;
    color: #fff;
    background: linear-gradient(#3f8cf0, #245edb 12%, #245edb 85%, #1941a5);
}
.start {
    align-self: stretch;
    width: 137px;
    gap: 4px;
    padding-left: 10px;
    margin-right: 9px;
    font: italic bold 18px "Open Sans", sans-serif;
    text-shadow: 1px 1px 2px #143c10;
    border-radius: 0 10px 12px 0;
    background: linear-gradient(#7cc47c, #3c943c 18%, #3c963c 80%, #286e28);
}
.start svg {
    width: 20px;
    height: 18px;
}
.task {
    width: 159px;
    height: 24px;
    gap: 4px;
    padding-left: 10px;
    margin-right: 1px;
    border-radius: 2px;
    background: linear-gradient(#6ca4fa, #3c80f0 20%, #3a7cf0);
}
.task.pressed {
    background: #1d4fb4;
    box-shadow: inset 1px 1px 2px #0c2c7c;
}
.fz {
    width: 16px;
    font: italic bold 12px/16px "Liberation Sans", sans-serif;
    text-align: center;
    background: #b40c0c;
}
.lang {
    margin-left: auto;
    padding: 0 2px;
    background: #2f6cd0;
}
.tray {
    align-self: stretch;
    display: flex;
    align-items: center;
    gap: 2px;
    padding-right: 14px;
    margin-left: 11px;
    background: linear-gradient(#2cb4f4, #1290e8 15%, #1290e8 85%, #0c70c0);
    border-left: 1px solid #0c4ca0;
}
.tray svg {
    width: 16px;
    height: 16px;
}
.tray .expand {
    margin-left: -9px;
}
.expand svg {
    width: 18px;
    height: 18px;
}
.clock {
    margin-left: 4px;
}

/* context menu */
.ctxmenu {
    position: absolute;
    left: 294px;
    top: 1px;
    width: 288px;
    padding: 2px 1px;
    font: 11px/16px "Noto Sans", sans-serif;
    color: #00156e;
    border: 1px solid #868686;
    border-radius: 2px;
    box-shadow: 3px 3px 3px rgba(0,0,0,0.45);
    background: linear-gradient(90deg, #eeeeee 25px, #c5c5c5 25px 26px, #fff 26px);
}
.ctxmenu button {
    position: relative;
    width: 100%;
    height: 22px;
    padding: 0 12px 0 30px;
}
.ctxmenu button svg {
    position: absolute;
    left: 4px;
    top: 3px;
    width: 16px;
    height: 16px;
}
.ctxmenu hr {
    height: 1px;
    margin: 3px 0 4px 31px;
    border: 0;
    background: #c5c5c5;
}
.ctxmenu kbd {
    margin-left: auto;
    font: inherit;
}
.ctxmenu .bold {
    font-weight: bold;
}
.ctxmenu button:disabled {
    color: #9c9c9c;
}
.ctxmenu .sub::after {
    content: "";
    position: absolute;
    right: 4px;
    top: 7px;
    border: 4px solid transparent;
    border-left-color: #00156e;
    border-right: 0;
}
.ctxmenu .hover {
    border-radius: 2px;
    box-shadow: inset 0 0 0 1px #dcc278;
    background: linear-gradient(#fffcdc, #ffe89c 48%, #ffd54c 52%, #ffe48c);
}
.cursor {
    position: absolute;
    left: 401px;
    top: 309px;
    width: 12px;
    height: 20px;
}
```
FILE: script.js
```js
const V6 = 'fe80::be3b:afff:...';
const GROUP6 = 'ff02::fb';
const GROUP4 = '224.0.0.251';
const OK = 'R QUERY STATUS=OK';
const RAC = 'C QUERY NAME=_raop';
const BC = 'C QUERY NAME=bc:3b';

// packet, source, destination, size, time, protocol, summary
const packets = [
    [84, V6, GROUP6, 132, '20,701562000', 'DNS', RAC],
    [85, '10.170.30.235', '10.170.30.255', 64, '22,506198000', 'UDP', 'Src=55555,Dst= 8612'],
    [86, '10.170.30.235', '10.170.30.255', 64, '22,508844000', 'UDP', 'Src=64900,Dst= 8612'],
    [87, '10.170.30.224', '193.252.242.25', 66, '22,571769000', 'FTP Ctl', 'Src= 1281,Dst='],
    [88, 'AppleCompu:6A:...', 'Broadcast', 64, '25,477874000', 'ARP Request', '192.168.0.1 = ?'],
    [89, '10.170.30.231', GROUP4, 275, '25,526106000', 'DNS', OK],
    [90, V6, GROUP6, 295, '25,527379000', 'DNS', OK],
    [91, '10.170.30.231', GROUP4, 109, '25,527522000', 'DNS', RAC],
    [92, V6, GROUP6, 129, '25,527649000', 'DNS', RAC],
    [93, '10.170.30.231', GROUP4, 233, '25,527704000', 'DNS', OK],
    [94, V6, GROUP6, 253, '25,527832000', 'DNS', OK],
    [95, '10.170.30.231', GROUP4, 114, '25,564837000', 'DNS', RAC],
    [96, V6, GROUP6, 134, '25,571039000', 'DNS', RAC],
    [97, '192.168.0.9', GROUP4, 233, '25,598411000', 'DNS', OK],
    [98, '10.170.30.231', GROUP4, 233, '25,666999000', 'DNS', BC],
    [99, V6, GROUP6, 253, '25,686547000', 'DNS', BC],
    [100, '10.170.30.231', GROUP4, 233, '25,939540000', 'DNS', BC],
    [101, V6, GROUP6, 253, '25,940669000', 'DNS', BC],
    [102, '10.170.30.231', GROUP4, 461, '26,191515000', 'DNS', OK],
    [103, V6, GROUP6, 481, '26,192805000', 'DNS', OK],
    [104, '10.170.30.231', GROUP4, 233, '26,418972000', 'DNS', OK],
    [105, V6, GROUP6, 253, '26,419102000', 'DNS', OK],
    [106, '10.170.30.231', GROUP4, 312, '26,570235000', 'DNS', RAC],
    [107, V6, GROUP6, 332, '26,570356000', 'DNS', RAC],
    [108, '10.170.30.231', GROUP4, 461, '27,168966000', 'DNS', OK],
    [109, V6, GROUP6, 481, '27,169105000', 'DNS', OK],
    [110, '10.170.30.231', GROUP4, 498, '28,418657000', 'DNS', OK],
    [111, V6, GROUP6, 518, '28,419724000', 'DNS', OK],
    [112, '10.170.30.224', '193.252.242.25', 66, '28,607031000', 'FTP Ctl', 'Src= 1281,Dst='],
    [113, '10.170.30.231', GROUP4, 312, '29,573665000', 'DNS', RAC]
];

const protoClass = { 'DNS': 'dns', 'UDP': 'udp', 'FTP Ctl': 'ftp', 'ARP Request': 'arp' };

function summaryClass(proto) {
    return proto === 'UDP' || proto === 'FTP Ctl' ? 'gray' : protoClass[proto];
}

document.getElementById('rows').innerHTML = packets.map(([num, src, dst, size, time, proto, summary]) => {
    const isMac = src.startsWith('Apple');
    const icon = isMac ? 'card' : 'pc';
    return `<tr class="${num === 87 ? 'selected' : ''}">
        <td class="r">${num}</td>
        <td class="${isMac ? 'mac' : ''}"><svg><use href="#${icon}"/></svg>${src}</td>
        <td><svg><use href="#${icon}"/></svg>${dst}</td>
        <td></td>
        <td class="r">${size}</td>
        <td class="r">${time}</td>
        <td class="${protoClass[proto]}">${proto}</td>
        <td class="${summaryClass(proto)}">${summary}</td>
    </tr>`;
}).join('');
```
